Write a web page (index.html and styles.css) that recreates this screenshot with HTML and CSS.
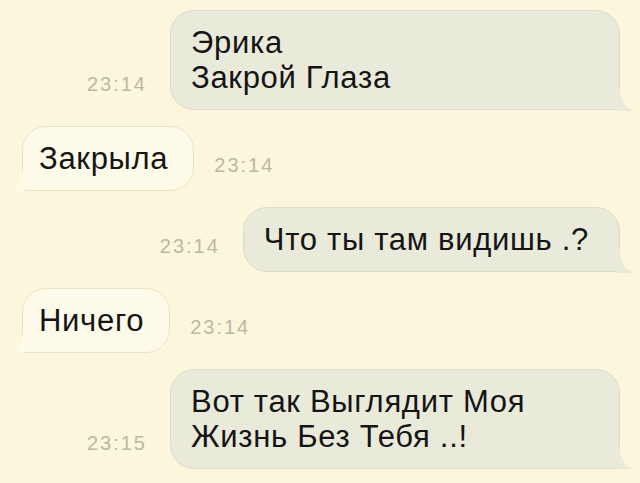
FILE: index.html
```html
<!DOCTYPE html>
<html lang="ru">
<head>
  <meta charset="UTF-8">
  <meta name="viewport" content="width=device-width, initial-scale=1.0">
  <title>Эрика</title>
  <link rel="stylesheet" href="styles.css">
</head>
<body>

  <div class="chat">
    <div class="row out">
      <span class="time">23:14</span>
      <div class="bubble wide">Эрика<br>Закрой Глаза</div>
    </div>

    <div class="row in">
      <div class="bubble">Закрыла</div>
      <span class="time">23:14</span>
    </div>

    <div class="row out">
      <span class="time">23:14</span>
      <div class="bubble">Что ты там видишь .?</div>
    </div>

    <div class="row in">
      <div class="bubble">Ничего</div>
      <span class="time">23:14</span>
    </div>

    <div class="row out">
      <span class="time">23:15</span>
      <div class="bubble wide">Вот так Выглядит Моя<br>Жизнь Без Тебя ..!</div>
    </div>
  </div>

</body>
</html>
```

FILE: styles.css
```css
* {
  box-sizing: border-box;
  margin: 0;
  padding: 0;
}

body {
  background: #fcf6dc;
  font-family: "Liberation Sans", Arial, sans-serif;
  color: #151515;
}

.chat {
  display: flex;
  flex-direction: column;
  gap: 16px;
  padding: 10px 20px 0 22px;
}

.row {
  display: flex;
  align-items: last baseline;
}

.row.out {
  justify-content: flex-end;
  gap: 23px;
}

.row.in {
  gap: 20px;
}

.bubble {
  position: relative;
  font-size: 31px;
  letter-spacing: 0.7px;
  line-height: 35px;
  padding: 14px 30px 14px 20px;
  border-radius: 24px;
}

.out .bubble {
  background: #e9eada;
  border: 1px solid #dcddc9;
  border-bottom-right-radius: 4px;
}

.in .bubble {
  background: #fdfae9;
  border: 1px solid #eae4c7;
  border-bottom-left-radius: 4px;
  padding: 14px 25px 14px 16px;
}

.bubble.wide {
  width: 450px;
}

/* tails */
.out .bubble::after {
  content: "";
  position: absolute;
  right: -14px;
  bottom: -2px;
  width: 15px;
  height: 26px;
  background: radial-gradient(ellipse 14px 25px at 100% 0, transparent 96%, #e9eada 100%);
}

.in .bubble::after {
  content: "";
  position: absolute;
  left: -13px;
  bottom: -1px;
  width: 14px;
  height: 22px;
  background: radial-gradient(ellipse 13px 21px at 0 0, transparent 96%, #fdfae9 100%);
}

.time {
  font-size: 20px;
  letter-spacing: 2px;
  color: #bcb8a3;
  position: relative;
  top: 3px;
}
```
